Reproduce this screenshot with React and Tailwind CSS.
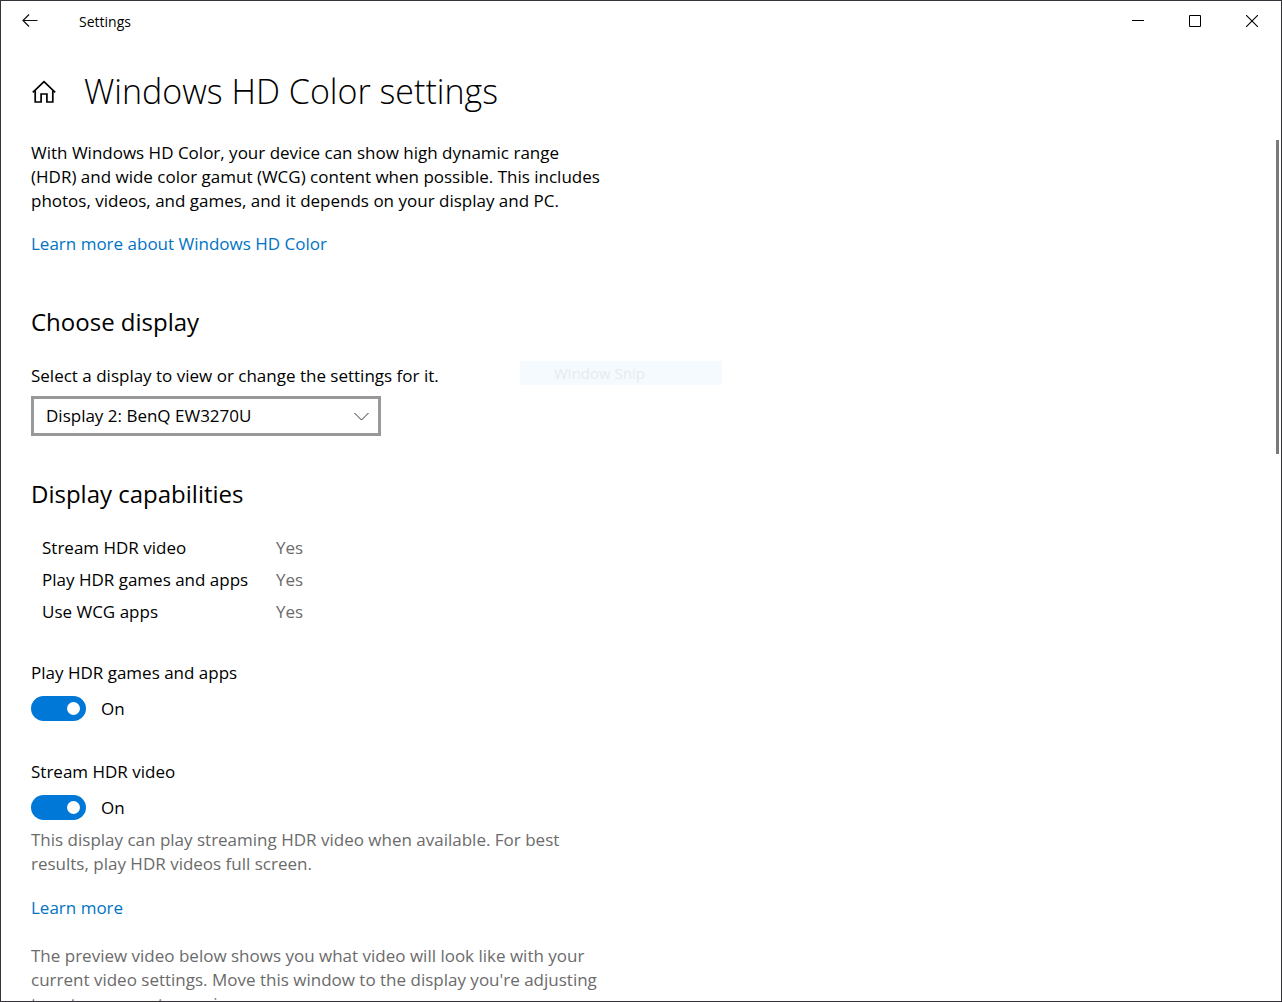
import React, { useState } from 'react';

const capabilities = [
  { name: 'Stream HDR video', value: 'Yes' },
  { name: 'Play HDR games and apps', value: 'Yes' },
  { name: 'Use WCG apps', value: 'Yes' },
];

const TitleBar = () => (
  <header className="h-10 shrink-0 flex items-center justify-between pr-px">
    <div className="flex items-center">
      <button type="button" aria-label="Back" className="w-[58px] h-10 flex items-center justify-center">
        <svg width="16" height="14" viewBox="0 0 16 14" fill="none" stroke="#111" strokeWidth="1.2">
          <path d="M15.5 6.5H1M7 .5L1 6.5l6 6" />
        </svg>
      </button>
      <span className="ml-5 pt-px text-sm">Settings</span>
    </div>
    <div className="flex">
      <button type="button" aria-label="Minimize" className="w-[57px] h-10 flex items-center justify-center">
        <svg width="12" height="12" viewBox="0 0 12 12" stroke="#000">
          <path d="M0 5.5h12" />
        </svg>
      </button>
      <button type="button" aria-label="Maximize" className="w-[57px] h-10 flex items-center justify-center">
        <svg width="12" height="12" viewBox="0 0 12 12" fill="none" stroke="#000">
          <path d="M.5 .5h11v11H.5z" />
        </svg>
      </button>
      <button type="button" aria-label="Close" className="w-[57px] h-10 flex items-center justify-center">
        <svg width="12" height="12" viewBox="0 0 12 12" stroke="#000" strokeWidth="1.1">
          <path d="M0 0l12 12M12 0L0 12" />
        </svg>
      </button>
    </div>
  </header>
);

const Toggle = ({ id, label }) => {
  const [on, setOn] = useState(true);

  return (
    <div>
      <span id={id} className="block">{label}</span>
      <div className="mt-[11px] flex items-center gap-[15px]">
        <button
          type="button"
          role="switch"
          aria-checked={on}
          aria-labelledby={id}
          onClick={() => setOn(!on)}
          className={`w-[55px] h-[25px] px-1.5 rounded-full flex items-center
            ${on ? 'bg-[#0078d7] justify-end' : 'bg-[#999] justify-start'}`}
        >
          <span className="w-[13px] h-[13px] rounded-full bg-white" />
        </button>
        <span>{on ? 'On' : 'Off'}</span>
      </div>
    </div>
  );
};

const App = () => {
  return (
    <div className="relative h-screen flex flex-col overflow-hidden bg-white border border-[#35323a] text-black text-[17px] leading-6 font-['Open_Sans','Noto_Sans',sans-serif]">
      <TitleBar />

      <div className="h-[100px] shrink-0 flex items-center gap-7 pl-[31px]">
        <a href="#home" aria-label="Home" className="pt-0.5">
          <svg width="24" height="24" viewBox="0 0 24 24" fill="none" stroke="#000" strokeWidth="1.7">
            <path d="M.8 12.4L12 1.6l11.2 10.8" />
            <path d="M3.2 10.5V22h5.9v-8h5.8v8h5.9V10.5" />
          </svg>
        </a>
        <h1 className="text-[34px] leading-12 font-light">Windows HD Color settings</h1>
      </div>

      <main className="flex-1 min-h-0 overflow-hidden px-[30px]">
        <div className="max-w-[570px]">
          <p>
            With Windows HD Color, your device can show high dynamic range (HDR) and wide color gamut (WCG) content when possible. This includes photos, videos, and games, and it depends on your display and PC.
          </p>
          <a href="#hd-color" className="mt-[19px] block w-fit text-[#0073c6]">Learn more about Windows HD Color</a>

          <h2 className="mt-[50px] text-2xl leading-8">Choose display</h2>
          <label htmlFor="display" className="mt-[26px] block">Select a display to view or change the settings for it.</label>
          <div className="relative mt-2 w-[350px]">
            <select
              id="display"
              className="w-full h-10 pl-3 pr-10 appearance-none bg-white border-3 border-[#999]"
            >
              <option>Display 2: BenQ EW3270U</option>
            </select>
            <svg className="absolute right-3 top-4 pointer-events-none" width="15" height="9" viewBox="0 0 15 9" fill="none" stroke="#333">
              <path d="M.5 1l7 7 7-7" />
            </svg>
          </div>

          <h2 className="mt-[42px] text-2xl leading-8">Display capabilities</h2>
          <table className="mt-[22px]">
            <tbody>
              {capabilities.map((item) => (
                <tr key={item.name} className="h-8">
                  <th scope="row" className="w-[245px] pl-[11px] font-normal text-left">{item.name}</th>
                  <td className="text-[#6b6b6b]">{item.value}</td>
                </tr>
              ))}
            </tbody>
          </table>

          <div className="mt-[33px]">
            <Toggle id="play-hdr" label="Play HDR games and apps" />
          </div>
          <div className="mt-[39px]">
            <Toggle id="stream-hdr" label="Stream HDR video" />
          </div>
          <p className="mt-2 text-[#6b6b6b]">
            This display can play streaming HDR video when available. For best results, play HDR videos full screen.
          </p>
          <a href="#learn-more" className="mt-5 block w-fit text-[#0073c6]">Learn more</a>
          <p className="mt-6 text-[#6b6b6b]">
            The preview video below shows you what video will look like with your current video settings. Move this window to the display you're adjusting to get an accurate preview.
          </p>
        </div>
      </main>

      {/* Scrollbar thumb */}
      <div className="absolute right-0.5 top-[139px] w-[3px] h-[314px] bg-[#7a7a7a]" />

      {/* Fading menu item of the snipping tool */}
      <div className="absolute left-[519px] top-[360px] w-[202px] h-6 pl-[34px] bg-[#f5fafe] text-[15px] leading-6 text-[#e6ebed]">
        Window Snip
      </div>
    </div>
  );
};

export default App;
